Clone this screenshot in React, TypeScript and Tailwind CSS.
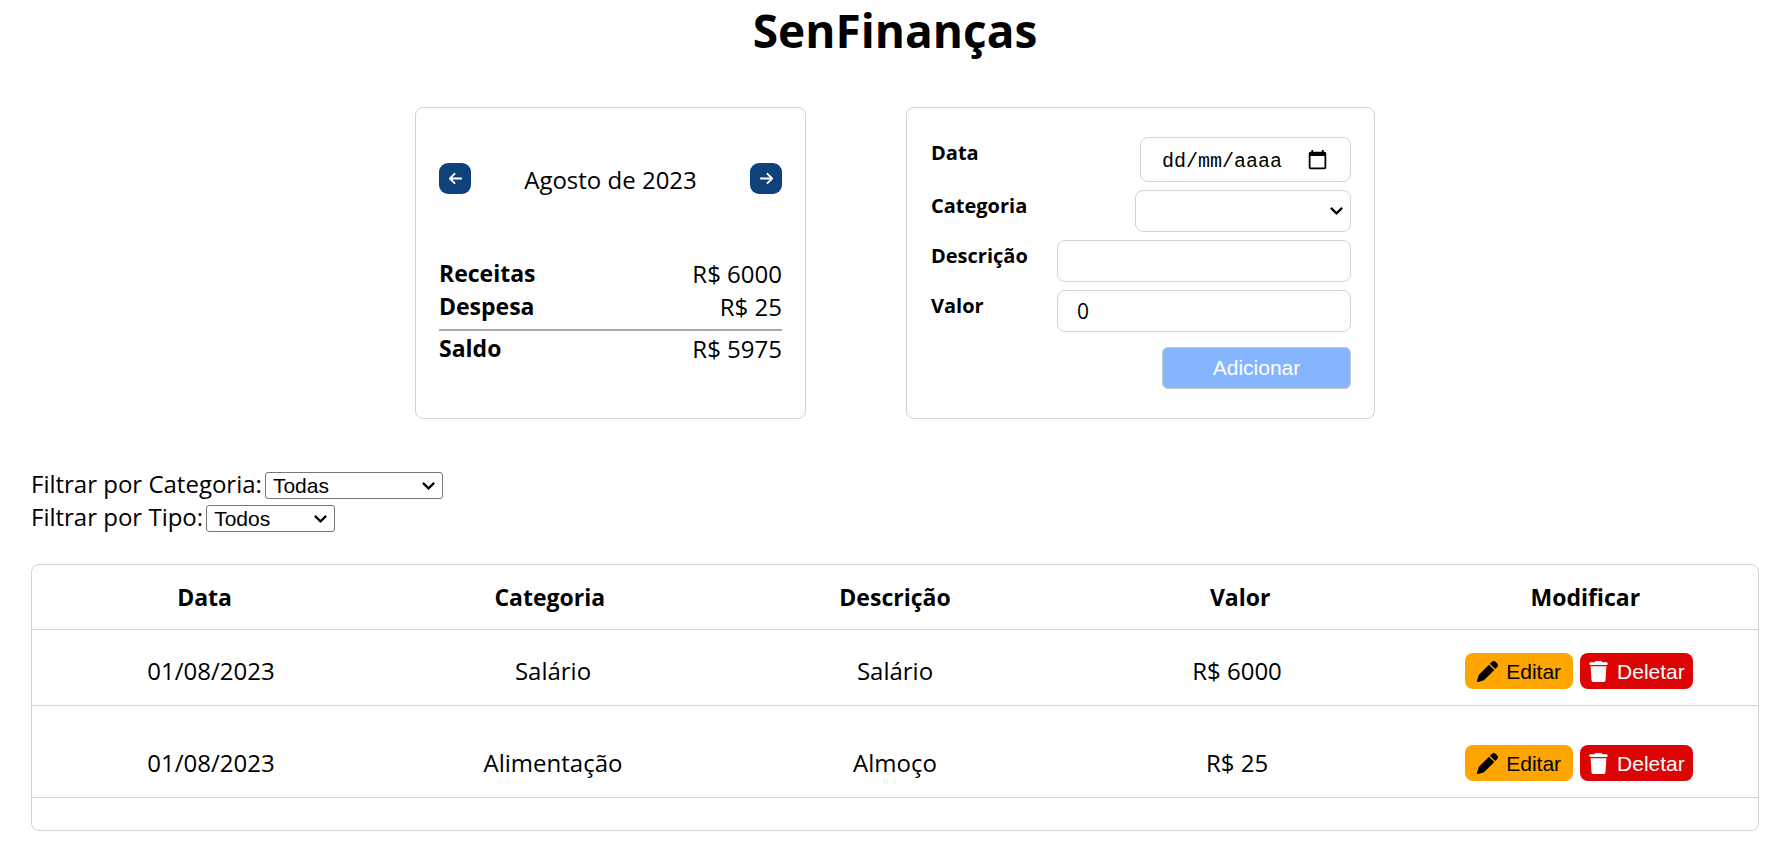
import { useState } from "react";
import type { ReactNode } from "react";
import { FaArrowLeft, FaArrowRight, FaPen, FaTrash } from "react-icons/fa6";
import { MdCalendarToday } from "react-icons/md";

type Item = {
  id: number;
  date: string;
  category: string;
  title: string;
  value: number;
};

const items: Item[] = [
  { id: 1, date: "01/08/2023", category: "Salário", title: "Salário", value: 6000 },
  { id: 2, date: "01/08/2023", category: "Alimentação", title: "Almoço", value: 25 },
];

const columns = ["Data", "Categoria", "Descrição", "Valor", "Modificar"];

function Chevron() {
  return (
    <svg
      viewBox="0 0 13 8"
      fill="none"
      stroke="currentColor"
      strokeWidth="2.2"
      className="pointer-events-none absolute top-1/2 right-2 h-2 w-[13px] -translate-y-1/2"
      aria-hidden="true"
    >
      <path d="M0.9 0.9 L6.5 6.4 L12.1 0.9" />
    </svg>
  );
}

function MonthButton({ label, children }: { label: string; children: ReactNode }) {
  return (
    <button
      type="button"
      aria-label={label}
      className="flex h-[31px] w-8 items-center justify-center rounded-[9px] bg-[#0f427a] text-white"
    >
      {children}
    </button>
  );
}

function SummaryRow({ label, value }: { label: string; value: number }) {
  return (
    <div className="flex justify-between leading-[33px]">
      <dt className="text-[23px] font-bold">{label}</dt>
      <dd>R$ {value}</dd>
    </div>
  );
}

function Summary() {
  return (
    <section className="w-[391px] rounded-lg border border-[#d0d3dc] px-[23px] pt-[52px]">
      <div className="flex items-center justify-between">
        <MonthButton label="Mês anterior">
          <FaArrowLeft size={15} />
        </MonthButton>
        <p className="pt-1 leading-8">Agosto de 2023</p>
        <MonthButton label="Próximo mês">
          <FaArrowRight size={15} />
        </MonthButton>
      </div>
      <dl className="mt-[61px]">
        <SummaryRow label="Receitas" value={6000} />
        <SummaryRow label="Despesa" value={25} />
        <div className="mt-[6px] border-t-2 border-[#a9a9a9] pt-px">
          <SummaryRow label="Saldo" value={5975} />
        </div>
      </dl>
    </section>
  );
}

function Field({ id, label, children }: { id: string; label: string; children: ReactNode }) {
  return (
    <div className="flex items-start justify-between">
      <label htmlFor={id} className="text-[20px] leading-8 font-bold">
        {label}
      </label>
      {children}
    </div>
  );
}

function EntryForm() {
  const [value, setValue] = useState("0");
  return (
    <form
      className="flex w-[469px] flex-col gap-2 rounded-lg border border-[#d0d3dc] pt-[29px] pr-[23px] pl-6"
      onSubmit={(event) => event.preventDefault()}
    >
      <Field id="data" label="Data">
        <div className="flex h-[45px] w-[211px] items-center justify-between rounded-lg border border-[#d0d3dc] pr-[22px] pl-[21px]">
          <input
            id="data"
            type="text"
            inputMode="numeric"
            placeholder="dd/mm/aaaa"
            className="w-[122px] bg-transparent pt-[3px] font-['Liberation_Mono',monospace] text-[20px] font-normal outline-none placeholder:text-black"
          />
          <button type="button" aria-label="Abrir calendário" className="pb-px">
            <MdCalendarToday size={21} />
          </button>
        </div>
      </Field>
      <Field id="categoria" label="Categoria">
        <div className="relative">
          <select
            id="categoria"
            defaultValue=""
            className="block h-[42px] w-[216px] appearance-none rounded-lg border border-[#d0d3dc] bg-white px-5 text-[21px]"
          >
            <option value=""></option>
            <option>Alimentação</option>
            <option>Salário</option>
          </select>
          <Chevron />
        </div>
      </Field>
      <Field id="descricao" label="Descrição">
        <input
          id="descricao"
          type="text"
          className="h-[42px] w-[294px] rounded-lg border border-[#d0d3dc] px-[19px] text-[21px]"
        />
      </Field>
      <Field id="valor" label="Valor">
        <input
          id="valor"
          type="text"
          inputMode="decimal"
          value={value}
          onChange={(event) => setValue(event.target.value)}
          className="h-[42px] w-[294px] rounded-lg border border-[#d0d3dc] px-[19px] text-[21px]"
        />
      </Field>
      <button
        type="submit"
        className="mt-[7px] h-[42px] w-[189px] self-end rounded-md border border-[#c3c8d2] bg-[#86b5ff] pb-[2px] font-['Liberation_Sans',sans-serif] text-[21px] font-normal text-white"
      >
        Adicionar
      </button>
    </form>
  );
}

function Filter({ id, label, options, width }: { id: string; label: string; options: string[]; width: string }) {
  return (
    <div className="flex h-[33px] items-center gap-[3px]">
      <label htmlFor={id} className="pb-1">
        {label}
      </label>
      <div className="relative flex">
        <select
          id={id}
          className={`${width} h-[27px] appearance-none rounded-[3px] border border-[#767676] bg-white px-[7px] font-['Liberation_Sans',sans-serif] text-[21px] leading-6 font-normal`}
        >
          {options.map((option) => (
            <option key={option}>{option}</option>
          ))}
        </select>
        <Chevron />
      </div>
    </div>
  );
}

function ItemRow({ item, spacing }: { item: Item; spacing: string }) {
  return (
    <tr className={`${spacing} grid grid-cols-5 border-b border-[#d0d3dc] px-2 pb-4 text-center leading-[35px]`}>
      <td>{item.date}</td>
      <td>{item.category}</td>
      <td>{item.title}</td>
      <td>R$ {item.value}</td>
      <td className="flex justify-center gap-[7px] font-['Liberation_Sans',sans-serif] text-[21px]">
        <button type="button" className="flex h-9 items-center gap-2 rounded-lg bg-[#ffa500] px-3">
          <FaPen size={21} />
          Editar
        </button>
        <button type="button" className="flex h-9 items-center gap-2 rounded-lg bg-[#dc0404] px-2 text-white">
          <FaTrash size={21} />
          Deletar
        </button>
      </td>
    </tr>
  );
}

export default function App() {
  return (
    <main className="bg-white pr-[27px] pb-5 pl-[31px] font-['Open_Sans',sans-serif] text-[24px] leading-[33px] text-black">
      <h1 className="text-center text-[46px] leading-[60px] font-bold">SenFinanças</h1>

      <div className="mt-[47px] flex min-h-[312px] flex-wrap justify-center gap-[100px]">
        <Summary />
        <EntryForm />
      </div>

      <div className="mt-[50px]">
        <Filter
          id="filtro-categoria"
          label="Filtrar por Categoria:"
          options={["Todas", "Alimentação", "Salário"]}
          width="w-[178px]"
        />
        <Filter id="filtro-tipo" label="Filtrar por Tipo:" options={["Todos", "Receita", "Despesa"]} width="w-[129px]" />
      </div>

      <div className="mt-[29px] rounded-lg border border-[#d0d3dc] pb-8">
        <table className="block">
          <thead className="block">
            <tr className="grid grid-cols-5 border-b border-[#d0d3dc] pt-4 pb-[15px]">
              {columns.map((column) => (
                <th key={column} className="text-[23px] font-bold">
                  {column}
                </th>
              ))}
            </tr>
          </thead>
          <tbody className="block">
            {items.map((item, index) => (
              <ItemRow key={item.id} item={item} spacing={index === 0 ? "pt-[23px]" : "pt-[39px]"} />
            ))}
          </tbody>
        </table>
      </div>
    </main>
  );
}
